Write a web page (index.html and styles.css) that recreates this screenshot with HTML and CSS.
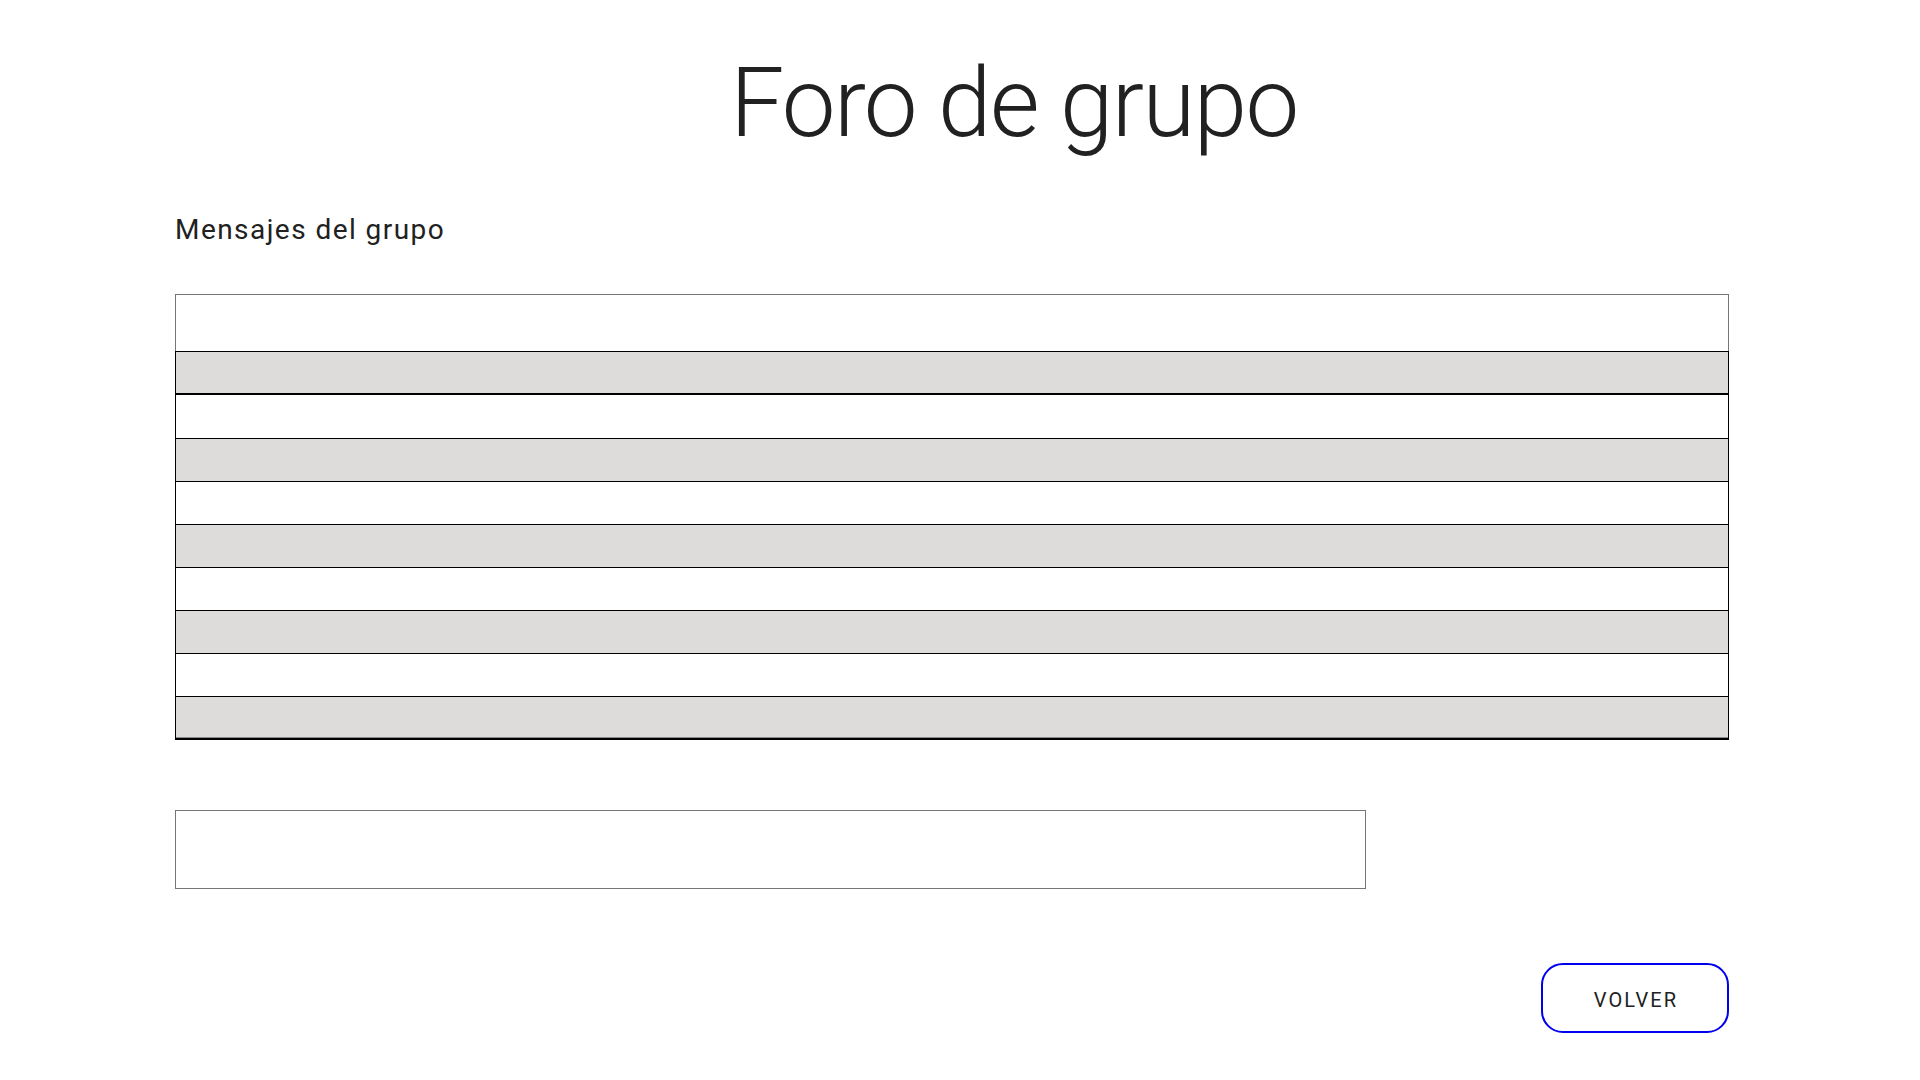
FILE: index.html
```html
<!DOCTYPE html>
<html lang="es">
<head>
<meta charset="utf-8">
<title>Foro de grupo</title>
<link rel="stylesheet" href="styles.css">
</head>
<body>
<header class="page-header">
  <h1 class="page-title">Foro de grupo</h1>
</header>
<main class="content">
  <h2 class="section-title">Mensajes del grupo</h2>
  <div class="messages">
    <div class="messages-head"></div>
    <div class="msg-row shaded first"></div>
    <div class="msg-row second"></div>
    <div class="msg-row shaded"></div>
    <div class="msg-row"></div>
    <div class="msg-row shaded"></div>
    <div class="msg-row"></div>
    <div class="msg-row shaded"></div>
    <div class="msg-row"></div>
    <div class="msg-row shaded last"></div>
  </div>
  <div class="composer">
    <input class="message-input" type="text" aria-label="Mensaje">
  </div>
  <div class="actions">
    <button class="back-button" type="button">Volver</button>
  </div>
</main>
</body>
</html>
```
FILE: styles.css
```css
* { box-sizing: border-box; }

html, body {
  margin: 0;
  padding: 0;
  background: #ffffff;
  font-family: Roboto, "Liberation Sans", sans-serif;
  color: #212121;
}

.page-header {
  text-align: center;
  padding-top: 47px;
  padding-left: 108px;
}

.page-title {
  margin: 0;
  font-size: 96px;
  font-weight: 300;
  line-height: 112px;
  letter-spacing: -1.5px;
  color: #212121;
}

.content {
  width: 1554px;
  margin-left: 175px;
  display: flex;
  flex-direction: column;
}

.section-title {
  margin: 55px 0 0 0;
  font-size: 28px;
  font-weight: 400;
  line-height: 32px;
  letter-spacing: 1.45px;
  color: #212121;
}

.messages {
  margin-top: 48px;
  display: flex;
  flex-direction: column;
}

.messages-head {
  height: 57px;
  border: 1px solid #767676;
  border-bottom: none;
  background: #ffffff;
}

.msg-row {
  height: 43px;
  border-left: 1px solid #000;
  border-right: 1px solid #000;
  border-bottom: 1px solid #000;
  background: #ffffff;
}

.msg-row.shaded {
  background: #dddcdb;
}

.msg-row.first {
  height: 44px;
  border-top: 1px solid #000;
  border-bottom: 2px solid #000;
}

.msg-row.second {
  height: 44px;
}

.msg-row.last {
  height: 43px;
  border-bottom: 2px solid #000;
  box-shadow: inset 0 -1px 0 #8a8a8a;
}

.composer {
  margin-top: 70px;
}

.message-input {
  display: block;
  width: 1191px;
  height: 79px;
  margin: 0;
  padding: 0 16px;
  border: 1px solid #767676;
  border-radius: 0;
  background: #ffffff;
  font-family: Roboto, "Liberation Sans", sans-serif;
  font-size: 18px;
  outline: none;
}

.actions {
  margin-top: 74px;
  display: flex;
  justify-content: flex-end;
}

.back-button {
  width: 188px;
  height: 70px;
  border: 2px solid #0000ee;
  border-radius: 22px;
  background: #ffffff;
  color: #212121;
  font-family: Roboto, "Liberation Sans", sans-serif;
  font-size: 20px;
  font-weight: 400;
  letter-spacing: 2.1px;
  text-transform: uppercase;
  padding: 4px 0 0 2px;
  cursor: pointer;
}
```
